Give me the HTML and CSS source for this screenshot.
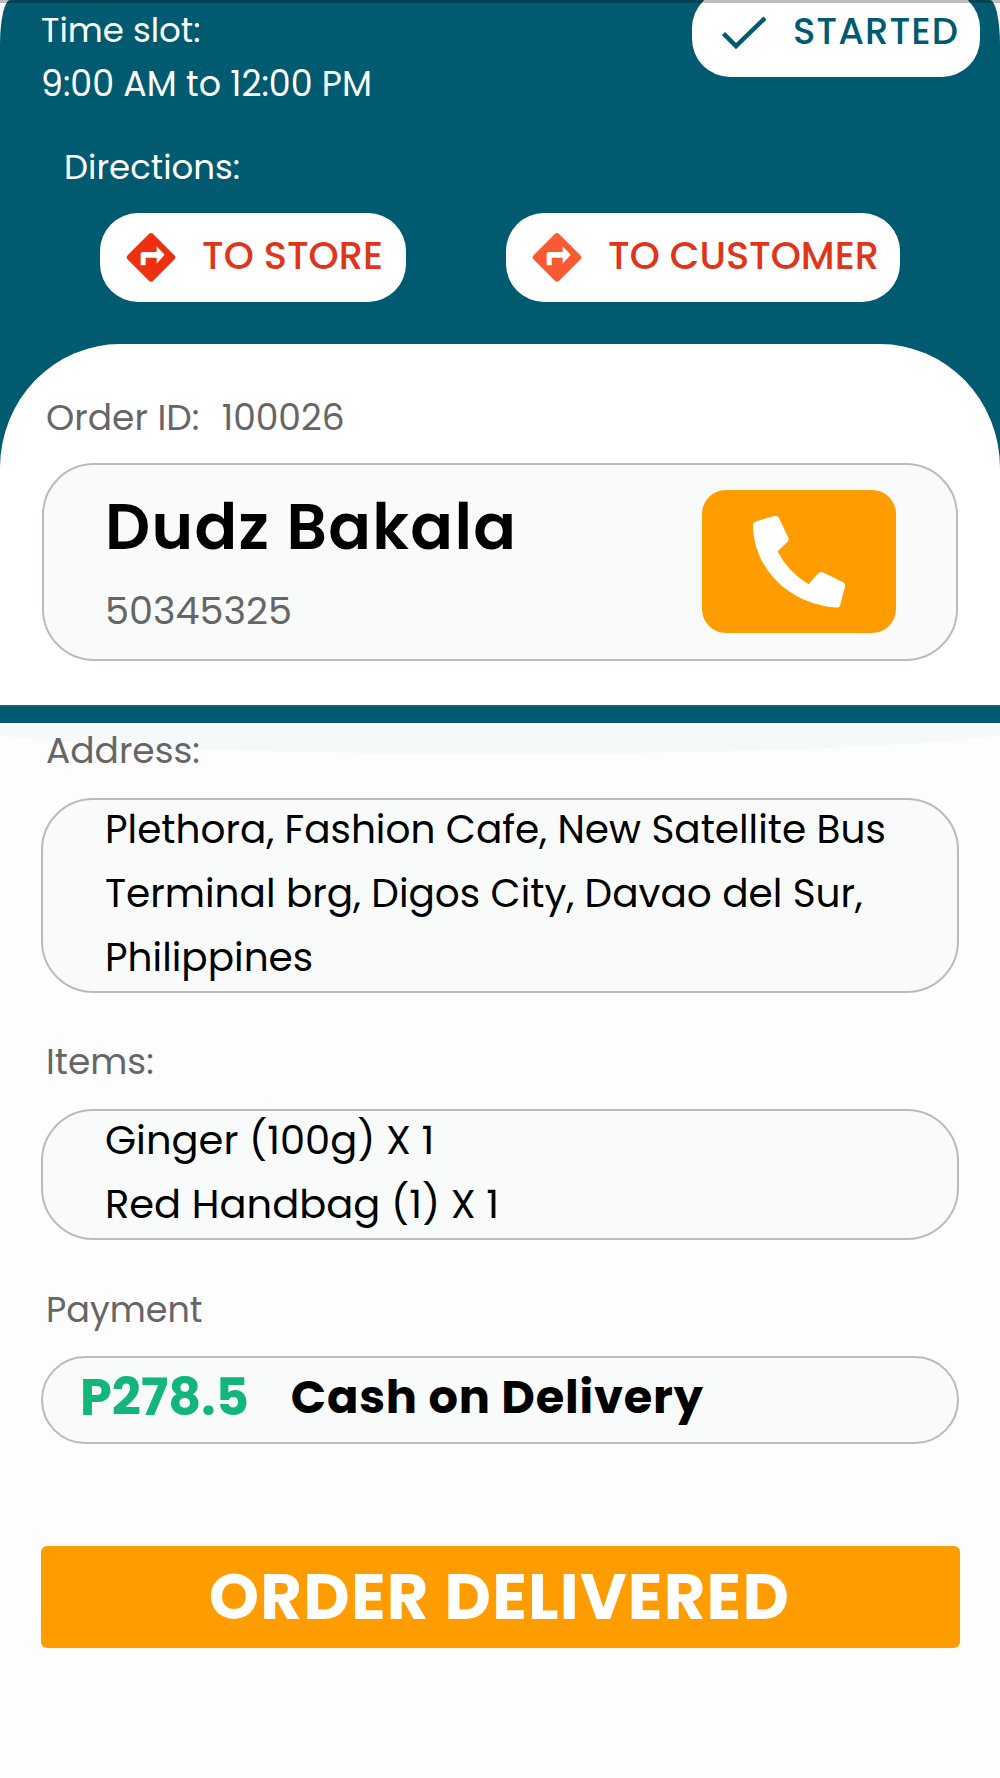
FILE: index.html
```html
<!DOCTYPE html>
<html lang="en">
<head>
<meta charset="utf-8">
<title>Order</title>
<link rel="stylesheet" href="styles.css">
</head>
<body>
<div class="page">
  <div class="top-line"></div>
  <header class="hero">
    <div class="slot-row">
      <div class="slot">
        <div class="slot-label">Time slot:</div>
        <div class="slot-value">9:00 AM to 12:00 PM</div>
      </div>
      <div class="status">
        <svg class="check" viewBox="0 0 44 34"><path d="M1.5 17.5 L14 30 L43 2" fill="none" stroke="#005B70" stroke-width="4.5"/></svg>
        <span>STARTED</span>
      </div>
    </div>
    <div class="dir-label">Directions:</div>
    <div class="dir-row">
      <div class="dir-btn store">
        <svg class="dir-icon" viewBox="0 0 150 153"><rect x="21" y="22" width="108" height="108" rx="9" transform="rotate(45 75 76)" fill="#EE2F10"/><path d="M44 100 V66 Q44 60 50 60 H92 V43 L116 68 L92 95 V77 H59 V100 Z" fill="#fff"/></svg>
        <span>TO STORE</span>
      </div>
      <div class="dir-btn customer">
        <svg class="dir-icon" viewBox="0 0 150 153"><rect x="21" y="22" width="108" height="108" rx="9" transform="rotate(45 75 76)" fill="#F95A34"/><path d="M44 100 V66 Q44 60 50 60 H92 V43 L116 68 L92 95 V77 H59 V100 Z" fill="#fff"/></svg>
        <span>TO CUSTOMER</span>
      </div>
    </div>
  </header>

  <section class="sheet">
    <div class="order-id">Order ID:&nbsp; <span class="order-no">100026</span></div>
    <div class="box contact">
      <div class="person">
        <div class="name">Dudz Bakala</div>
        <div class="phone">50345325</div>
      </div>
      <div class="call">
        <svg class="call-icon" viewBox="36 30 580 428"><path fill="#fff" d="M196 124 L252 108 Q262 106 266 114 L294 172 Q297 180 291 186 L262 214 Q296 278 355 312 L383 280 Q389 273 397 276 L458 306 Q465 310 464 318 L449 375 Q447 383 438 382 C300 372 190 270 188 134 Q188 126 196 124 Z"/></svg>
      </div>
    </div>
  </section>

  <div class="divider"></div>

  <main class="details">
    <div class="curve"></div>
    <div class="field-label address-label">Address:</div>
    <div class="box text-box address"><div class="box-lines">Plethora, Fashion Cafe, New Satellite Bus Terminal brg, Digos City, Davao del Sur, Philippines</div></div>
    <div class="field-label items-label">Items:</div>
    <div class="box text-box items">
      <div class="box-lines">
        <div>Ginger (100g) X 1</div>
        <div>Red Handbag (1) X 1</div>
      </div>
    </div>
    <div class="field-label payment-label">Payment</div>
    <div class="box payment">
      <span class="amount">P278.5</span>
      <span class="method">Cash on Delivery</span>
    </div>
    <button class="deliver">ORDER DELIVERED</button>
  </main>
</div>
</body>
</html>
```
FILE: styles.css
```css
* { box-sizing: border-box; }
html, body { margin: 0; padding: 0; }
body { background: #fdfdfd; font-family: Poppins, "Open Sans", "Noto Sans", sans-serif; }
.page { position: relative; width: 1000px; height: 1778px; overflow: hidden; }
.top-line { position: absolute; left: 0; right: 0; top: 0; height: 3px; background: rgba(0, 0, 0, .25); z-index: 5; }

.hero { background: #005B70; height: 470px; border-radius: 10px 10px 0 0 / 45px 45px 0 0; padding: 0 20px 0 41px; color: #fff; }
.slot-row { display: flex; justify-content: space-between; align-items: flex-start; }
.slot { padding-top: 4px; }
.slot-label { font-size: 34px; line-height: 53px; }
.slot-value { font-size: 34.8px; line-height: 53px; }
.status { width: 288px; height: 87px; margin-top: -10px; background: #fff; border-radius: 38px; color: #005B70; font-size: 37px; font-weight: 500; letter-spacing: 1px; display: flex; align-items: center; padding: 0 0 6px 30px; gap: 27px; }
.check { width: 44px; height: 34px; flex: none; margin-top: 5px; }
.dir-label { font-size: 34px; margin: 34px 0 0 23px; line-height: 46px; }
.dir-row { display: flex; margin: 23px 0 0 59px; gap: 100px; }
.dir-btn { height: 89px; background: #fff; border-radius: 38px; display: flex; align-items: center; color: #E0351A; font-size: 38.4px; font-weight: 500; padding-left: 26px; gap: 26px; }
.dir-btn span { margin-top: -4px; }
.store { width: 306px; }
.customer { width: 394px; }
.dir-icon { width: 50px; height: 51px; flex: none; }

.sheet { margin-top: -126px; background: #fff; position: relative; height: 361px; border-radius: 120px 120px 0 0 / 124px 124px 0 0; padding: 49px 42px 0; }
.order-id { font-size: 36px; color: #666; line-height: 50px; padding-left: 4px; }
.order-no { margin-left: 3px; }
.box { border: 2px solid #bbb; background: #f9fbfa; border-radius: 52px; }
.contact { height: 198px; margin-top: 20px; display: flex; justify-content: space-between; padding: 0 60px 2px 61px; align-items: center; }
.name { font-size: 63px; font-weight: 600; letter-spacing: 1.3px; color: #000; line-height: 80px; }
.phone { font-size: 38.2px; color: #666; line-height: 50px; margin-top: 19px; }
.call { width: 194px; height: 143px; background: #FF9C00; border-radius: 24px; }
.call-icon { display: block; width: 194px; height: 143px; }
.divider { position: relative; height: 18px; background: #005B70; border-top: 1px solid #3b6472; z-index: 2; }

.details { position: relative; padding: 0 41px; }
.curve { position: absolute; left: -30px; right: -30px; top: 0; height: 28px; background: #f5f9fa; border-radius: 0 0 50% 50% / 0 0 100% 100%; }
.field-label { position: relative; font-size: 36px; color: #666; line-height: 50px; padding-left: 5px; }
.text-box { position: relative; color: #000; padding: 0 50px 0 62px; }
.box-lines { margin-top: -2px; line-height: 64px; }
.address-label { margin-top: 3px; }
.address { height: 195px; margin-top: 22px; font-size: 39px; }
.items-label { margin-top: 44px; }
.items { height: 131px; margin-top: 22px; font-size: 40px; }
.items .box-lines { margin-top: -3px; }
.payment-label { margin-top: 45px; font-size: 35px; }
.payment { height: 88px; margin-top: 21px; border-radius: 44px; display: flex; align-items: center; padding: 0 0 6px 37px; gap: 42px; }
.amount { font-size: 51px; font-weight: 700; color: #12B57A; }
.method { font-size: 46.3px; font-weight: 700; letter-spacing: .8px; color: #000; }
.deliver { display: block; width: 919px; height: 102px; margin-top: 102px; padding: 0 2px 2px 0; background: #FF9C00; border: 0; border-radius: 6px; color: #fff; font: 700 64px Poppins, "Open Sans", sans-serif; letter-spacing: 1.2px; }
```
